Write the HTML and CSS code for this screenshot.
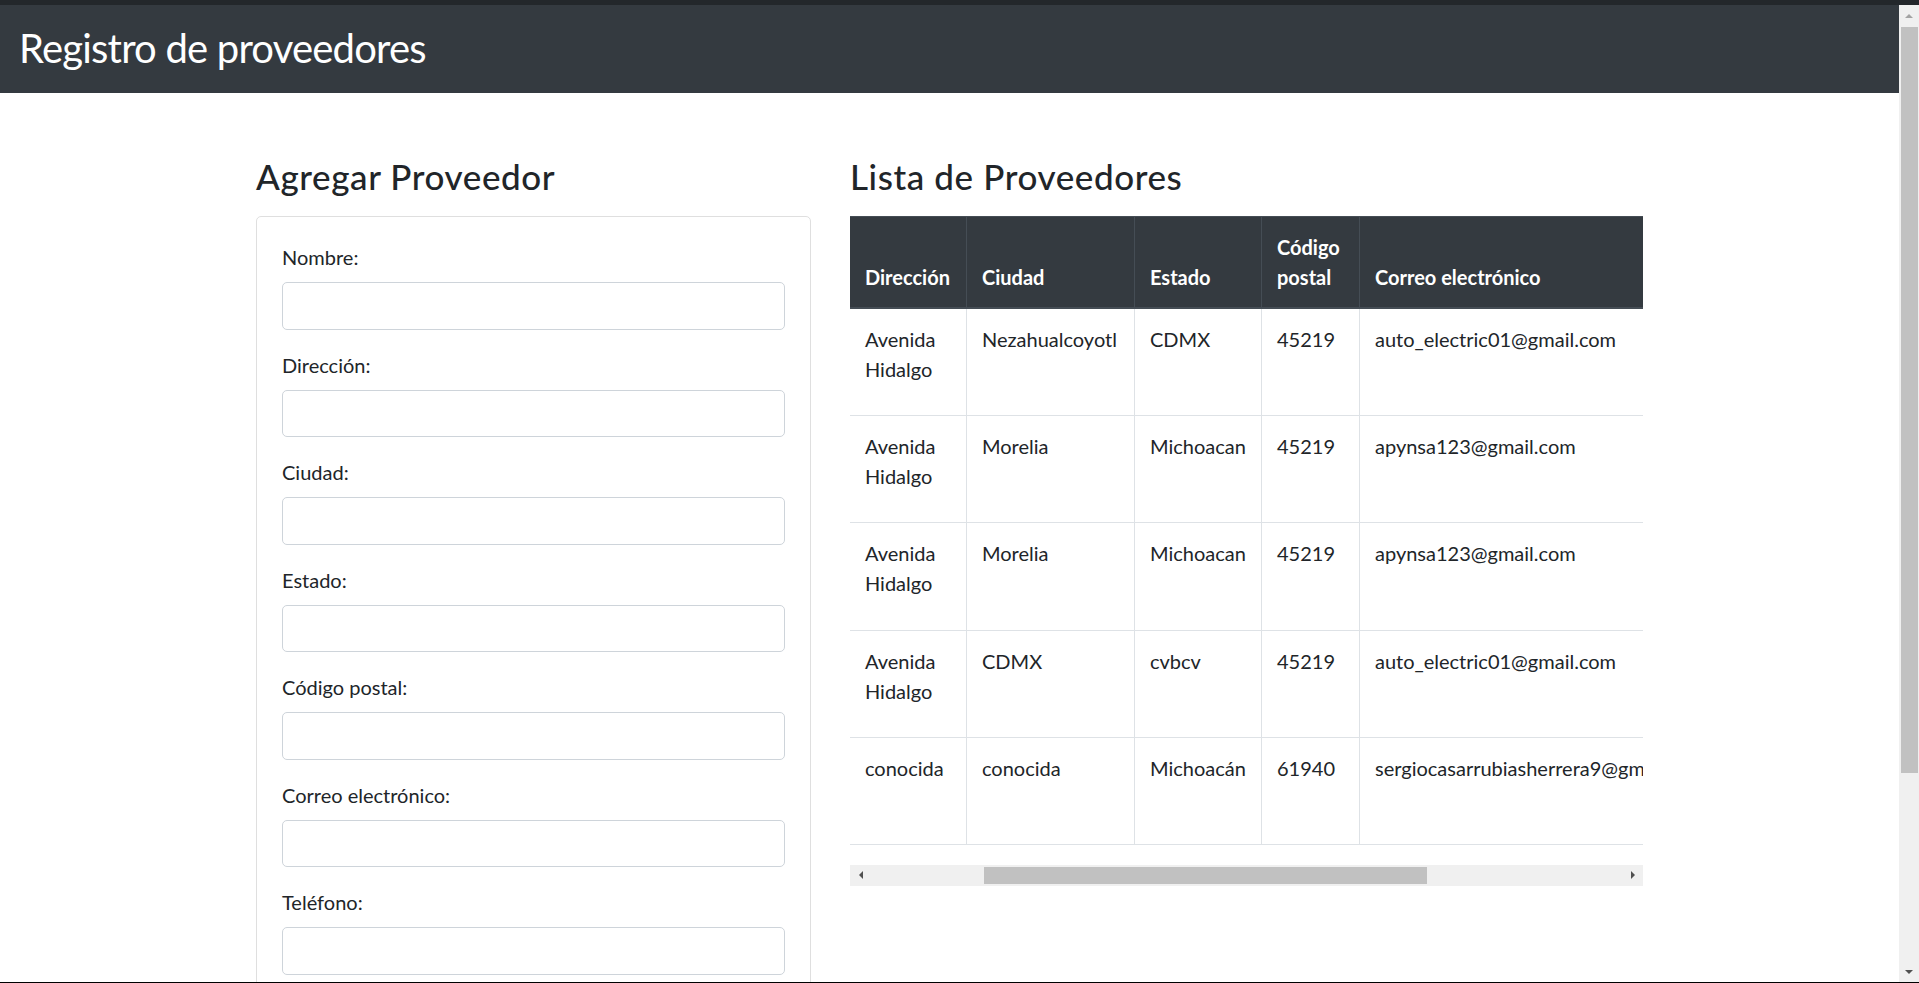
FILE: index.html
```html
<!DOCTYPE html>
<html lang="es">
<head>
<meta charset="utf-8">
<title>Registro de proveedores</title>
<link rel="stylesheet" href="styles.css">
</head>
<body>
<div class="chrome-top"></div>
<div class="window">
  <div class="viewport">
    <header class="topbar">
      <h1 class="brand">Registro de proveedores</h1>
    </header>
    <main class="container">
      <section class="col-form">
        <h3 class="section-title">Agregar Proveedor</h3>
        <form class="card">
          <div class="form-group">
            <label for="nombre">Nombre:</label>
            <input id="nombre" class="form-control" type="text">
          </div>
          <div class="form-group">
            <label for="direccion">Dirección:</label>
            <input id="direccion" class="form-control" type="text">
          </div>
          <div class="form-group">
            <label for="ciudad">Ciudad:</label>
            <input id="ciudad" class="form-control" type="text">
          </div>
          <div class="form-group">
            <label for="estado">Estado:</label>
            <input id="estado" class="form-control" type="text">
          </div>
          <div class="form-group">
            <label for="cp">Código postal:</label>
            <input id="cp" class="form-control" type="text">
          </div>
          <div class="form-group">
            <label for="correo">Correo electrónico:</label>
            <input id="correo" class="form-control" type="email">
          </div>
          <div class="form-group">
            <label for="telefono">Teléfono:</label>
            <input id="telefono" class="form-control" type="tel">
          </div>
        </form>
      </section>
      <section class="col-list">
        <h3 class="section-title">Lista de Proveedores</h3>
        <div class="table-responsive">
          <table class="table">
            <thead>
              <tr>
                <th class="c-nombre"></th>
                <th class="c-dir">Dirección</th>
                <th class="c-ciudad">Ciudad</th>
                <th class="c-estado">Estado</th>
                <th class="c-cp">Código postal</th>
                <th class="c-correo">Correo electrónico</th>
                <th class="c-tel"></th>
                <th class="c-acc"></th>
              </tr>
            </thead>
            <tbody>
              <tr>
                <td class="c-nombre"></td>
                <td>Avenida Hidalgo</td>
                <td>Nezahualcoyotl</td>
                <td>CDMX</td>
                <td>45219</td>
                <td>auto_electric01@gmail.com</td>
                <td></td>
                <td><div class="acc-space"></div></td>
              </tr>
              <tr>
                <td class="c-nombre"></td>
                <td>Avenida Hidalgo</td>
                <td>Morelia</td>
                <td>Michoacan</td>
                <td>45219</td>
                <td>apynsa123@gmail.com</td>
                <td></td>
                <td><div class="acc-space"></div></td>
              </tr>
              <tr>
                <td class="c-nombre"></td>
                <td>Avenida Hidalgo</td>
                <td>Morelia</td>
                <td>Michoacan</td>
                <td>45219</td>
                <td>apynsa123@gmail.com</td>
                <td></td>
                <td><div class="acc-space"></div></td>
              </tr>
              <tr>
                <td class="c-nombre"></td>
                <td>Avenida Hidalgo</td>
                <td>CDMX</td>
                <td>cvbcv</td>
                <td>45219</td>
                <td>auto_electric01@gmail.com</td>
                <td></td>
                <td><div class="acc-space"></div></td>
              </tr>
              <tr>
                <td class="c-nombre"></td>
                <td>conocida</td>
                <td>conocida</td>
                <td>Michoacán</td>
                <td>61940</td>
                <td>sergiocasarrubiasherrera9@gmail.com</td>
                <td></td>
                <td><div class="acc-space"></div></td>
              </tr>
            </tbody>
          </table>
        </div>
        <div class="hscroll">
          <div class="sb-btn"><span class="arrow arrow-left"></span></div>
          <div class="hs-track"><div class="hs-thumb"></div></div>
          <div class="sb-btn"><span class="arrow arrow-right"></span></div>
        </div>
      </section>
    </main>
  </div>
  <div class="vscroll">
    <div class="sb-btn vs-btn"><span class="arrow arrow-up"></span></div>
    <div class="vs-track"><div class="vs-thumb"></div></div>
    <div class="sb-btn vs-btn"><span class="arrow arrow-down"></span></div>
  </div>
</div>
<div class="chrome-bottom"></div>
<script src="script.js"></script>
</body>
</html>
```

FILE: styles.css
```css
* { box-sizing: border-box; }

html, body {
  margin: 0;
  padding: 0;
}

body {
  height: 983px;
  overflow: hidden;
  background: #ffffff;
  font-family: "Lato", "Open Sans", sans-serif;
  font-size: 20px;
  line-height: 30px;
  color: #212529;
}

.chrome-top {
  height: 5px;
  background: #23272b;
}

.chrome-bottom {
  height: 1px;
  background: #000000;
}

.window {
  display: flex;
  height: 977px;
}

.viewport {
  flex: 1;
  min-width: 0;
  overflow: hidden;
}

/* ---------- top bar ---------- */
.topbar {
  background: #343a40;
  padding: 19px 19px 21px;
}

.brand {
  margin: 0;
  font-size: 40px;
  line-height: 48px;
  font-weight: 400;
  letter-spacing: -0.8px;
  color: #ffffff;
}

/* ---------- layout ---------- */
.container {
  width: 1387px;
  margin: 0 auto;
  padding-top: 62px;
  display: flex;
  gap: 39px;
  align-items: flex-start;
}

.col-form {
  width: 555px;
  flex: none;
}

.col-list {
  flex: 1;
  min-width: 0;
}

.section-title {
  margin: 0 0 19px;
  font-size: 35px;
  line-height: 42px;
  font-weight: 500;
  letter-spacing: 0.6px;
  color: #212529;
}

/* ---------- form card ---------- */
.card {
  display: block;
  margin: 0;
  border: 1px solid #dfdfdf;
  border-radius: 5px;
  padding: 25px;
}

.form-group {
  margin-bottom: 20px;
}

.form-group label {
  display: block;
  margin-bottom: 10px;
}

.form-control {
  display: block;
  width: 100%;
  height: 47.5px;
  margin: 0;
  padding: 7.5px 15px;
  border: 1px solid #ced4da;
  border-radius: 5px;
  background: #ffffff;
  font: inherit;
  color: #495057;
}

/* ---------- table ---------- */
.table-responsive {
  width: 100%;
  overflow: hidden;
}

.table {
  table-layout: fixed;
  width: 1344px;
  border-collapse: separate;
  border-spacing: 0;
  margin-bottom: 20px;
}

.table th,
.table td {
  padding: 15px;
  text-align: left;
  border-right: 1px solid #dee2e6;
  border-bottom: 1px solid #dee2e6;
}

.table th {
  vertical-align: bottom;
  background: #343a40;
  color: #ffffff;
  font-weight: 700;
  border-top: 1px solid #454d55;
  border-right-color: #454d55;
  border-bottom: 2px solid #454d55;
}

.table td {
  vertical-align: top;
}

.table th.c-nombre { border-left: 1px solid #454d55; }
.table td.c-nombre { border-left: 1px solid #dee2e6; }

.c-nombre { width: 202px; }
.c-dir { width: 117px; }
.c-ciudad { width: 168px; }
.c-estado { width: 127px; }
.c-cp { width: 98px; }
.c-correo { width: 365px; }
.c-tel { width: 130px; }
.c-acc { width: 137px; }

.acc-space {
  height: 76.2px;
}

/* ---------- scrollbars ---------- */
.sb-btn {
  flex: none;
  width: 21px;
  height: 21px;
  display: flex;
  align-items: center;
  justify-content: center;
}

.arrow {
  display: block;
  width: 0;
  height: 0;
  border-style: solid;
  border-color: transparent;
}

.arrow-left {
  border-width: 4px 4px 4px 0;
  border-right-color: #505050;
}

.arrow-right {
  border-width: 4px 0 4px 4px;
  border-left-color: #505050;
}

.arrow-up {
  border-width: 0 4px 4px 4px;
  border-bottom-color: #a3a3a3;
}

.arrow-down {
  border-width: 4px 4px 0 4px;
  border-top-color: #505050;
}

.hscroll {
  display: flex;
  height: 21px;
  background: #f0f0f0;
}

.hs-track {
  flex: 1;
}

.hs-thumb {
  width: 443px;
  height: 17px;
  margin: 2px 0 0 113px;
  background: #c1c1c1;
}

.vscroll {
  flex: none;
  width: 20px;
  display: flex;
  flex-direction: column;
  background: #f0f0f0;
}

.vs-btn {
  width: 20px;
}

.vs-track {
  flex: 1;
}

.vs-thumb {
  height: 746px;
  margin: 1px 1px 0 2px;
  background: #c1c1c1;
}
```

FILE: script.js
```js
(function () {
  var wrap = document.querySelector('.table-responsive');
  var dir = document.querySelector('.table th.c-dir');
  if (wrap && dir) {
    wrap.scrollLeft = dir.offsetLeft;
  }
})();
```
